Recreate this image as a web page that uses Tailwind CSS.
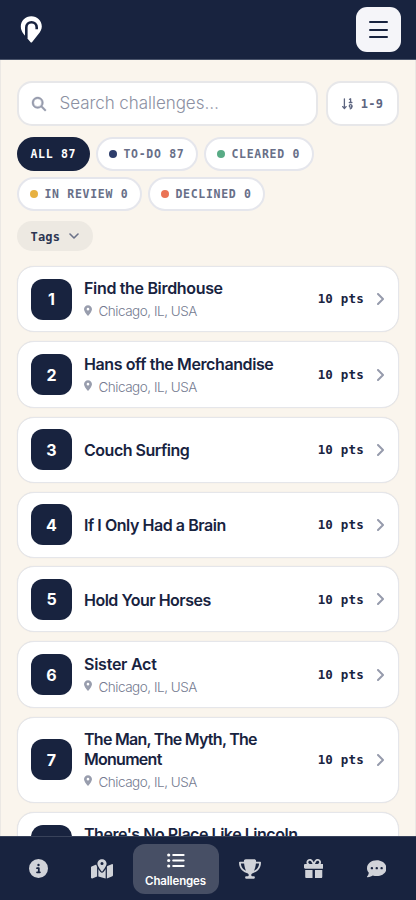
<!DOCTYPE html>
<html lang="en">
<head>
<meta charset="utf-8">
<title>Challenges</title>
<script src="https://cdn.jsdelivr.net/npm/@tailwindcss/browser@4"></script>
</head>
<body class="w-[416px] h-[900px] overflow-hidden bg-[#faf5ed] font-['Inter',sans-serif] text-[#18233f]">
<div class="flex flex-col h-[900px]">
  <header class="h-[60px] shrink-0 bg-[#18233f] border-b border-[#4a546b] flex items-center justify-between pl-5 pr-[15px]">
    <svg class="w-[22px] h-[27px]" viewBox="0 0 22 27"><path fill="#fff" d="M11.3 .2C5.4.2.8 4.8.8 10.5c0 3 1.2 5.4 3 7.8l6.6 7.8a1.2 1.2 0 0 0 1.8 0l6.1-7.8c2-2.5 3.5-4.9 3.5-7.8C21.8 4.8 17.2.2 11.3.2z"/><path fill="none" stroke="#18233f" stroke-width="2.6" d="M6.3 22.5V11.4a5.2 5.2 0 0 1 10.4 0v1.9"/></svg>
    <div class="size-[45px] rounded-[11px] bg-[#f5f5f9] flex flex-col items-center justify-center gap-[5.5px]">
      <i class="w-[19px] h-[2px] rounded bg-[#18233f]"></i><i class="w-[19px] h-[2px] rounded bg-[#18233f]"></i><i class="w-[19px] h-[2px] rounded bg-[#18233f]"></i>
    </div>
  </header>

  <main class="flex-1 min-h-0 overflow-hidden border-x border-[#ebe8e4] px-4 pt-[21px]">
    <div class="flex gap-2">
      <div class="w-[301px] h-[45px] rounded-[15px] border-2 border-[#e7e7e9] bg-white flex items-center pl-[13px]">
        <svg class="size-[14px] fill-[#969bac] shrink-0 overflow-visible stroke-[#969bac] stroke-[16px]" viewBox="0 0 512 512"><path d="M416 208c0 45.9-14.9 88.3-40 122.7L502.6 457.4c12.5 12.5 12.5 32.8 0 45.3s-32.8 12.5-45.3 0L330.7 376c-34.4 25.2-76.8 40-122.7 40C93.1 416 0 322.9 0 208S93.1 0 208 0S416 93.1 416 208zM208 352a144 144 0 1 0 0-288 144 144 0 1 0 0 288z"/></svg>
        <span class="ml-[13.5px] text-[17px] font-light tracking-[-0.05px] text-[#8c90a2] whitespace-nowrap">Search challenges…</span>
      </div>
      <div class="w-[73px] h-[45px] rounded-[15px] border-2 border-[#e7e7e9] bg-white flex items-center justify-center gap-[7px] text-[#5d6580]">
        <svg class="w-[12px] h-[12px]" viewBox="0 0 12 12" fill="none" stroke="currentColor" stroke-width="1.3" stroke-linecap="round" stroke-linejoin="round"><path d="M2.4 .8v9.5M.7 8.6l1.7 1.9 1.7-1.9M7.5 1.3l1.1-.5v3.5M7.3 4.5h2.6M9.9 8v.7q0 1.6-1.7 2.1"/><circle cx="8.6" cy="7.9" r="1.3"/></svg>
        <span class="font-['DejaVu_Sans_Mono',monospace] font-bold text-[12px] tracking-[0.3px] pt-px">1-9</span>
      </div>
    </div>

    <div class="flex flex-wrap gap-x-[6px] gap-y-[6px] mt-[10.5px] font-['DejaVu_Sans_Mono',monospace] font-bold text-[11.5px] tracking-[0.7px] text-[#686f88] whitespace-nowrap">
      <div class="w-[73px] h-[34px] rounded-full bg-[#18233f] text-white pl-[13.5px] pt-[2px] flex items-center">ALL 87</div>
      <div class="w-[102px] h-[34px] rounded-full bg-white border-2 border-[#e5e6ec] pl-[11px] flex items-center gap-[6.5px]"><i class="size-[8px] shrink-0 rounded-full bg-[#2e3d6b]"></i><span class="pt-[2px]">TO-DO 87</span></div>
      <div class="w-[110px] h-[34px] rounded-full bg-white border-2 border-[#e5e6ec] pl-[11px] flex items-center gap-[6.5px]"><i class="size-[8px] shrink-0 rounded-full bg-[#58ab85]"></i><span class="pt-[2px]">CLEARED 0</span></div>
      <div class="w-[125px] h-[34px] rounded-full bg-white border-2 border-[#e5e6ec] pl-[11px] flex items-center gap-[6.5px]"><i class="size-[8px] shrink-0 rounded-full bg-[#e7b141]"></i><span class="pt-[2px]">IN REVIEW 0</span></div>
      <div class="w-[117px] h-[34px] rounded-full bg-white border-2 border-[#e5e6ec] pl-[11px] flex items-center gap-[6.5px]"><i class="size-[8px] shrink-0 rounded-full bg-[#ea7355]"></i><span class="pt-[2px]">DECLINED 0</span></div>
    </div>

    <div class="mt-[10.5px] w-[76px] h-[30px] rounded-full bg-[#ede9e2] flex items-center pl-[13.5px] gap-[9px]">
      <span class="font-['DejaVu_Sans_Mono',monospace] font-bold text-[12px] tracking-[0.2px] text-[#2c3652] pt-[2px]">Tags</span>
      <svg class="w-[10px] h-[6px]" viewBox="0 0 10 6" fill="none" stroke="#6b7289" stroke-width="1.6" stroke-linecap="round" stroke-linejoin="round"><path d="M1 1l4 4 4-4"/></svg>
    </div>

    <div id="list" class="mt-[14.7px] flex flex-col gap-[8.8px]"></div>
  </main>

  <nav class="h-[64px] shrink-0 bg-[#18233f] border-t border-[#38425a] relative flex items-center text-[#d1d3d9] pl-[29px]">
    <svg class="size-[19px] shrink-0" fill="currentColor" viewBox="0 0 512 512"><path d="M256 512A256 256 0 1 0 256 0a256 256 0 1 0 0 512zM216 336h24V272H216c-13.3 0-24-10.7-24-24s10.7-24 24-24h48c13.3 0 24 10.7 24 24v88h8c13.3 0 24 10.7 24 24s-10.7 24-24 24H216c-13.3 0-24-10.7-24-24s10.7-24 24-24zm40-208a32 32 0 1 1 0 64 32 32 0 1 1 0-64z"/></svg>
    <svg class="w-[22px] h-[20px] shrink-0 ml-[43px]" fill="currentColor" viewBox="0 0 576 512"><path d="M408 120c0 54.6-73.1 151.9-105.2 192c-7.7 9.6-22 9.6-29.6 0C241.1 271.9 168 174.6 168 120C168 53.7 221.7 0 288 0s120 53.7 120 120zm8 80.4c3.5-6.9 6.7-13.8 9.6-20.6c.5-1.2 1-2.5 1.5-3.7l116-46.4C558.9 123.4 576 135 576 152V422.8c0 9.8-6 18.6-15.1 22.3L416 503V200.4zM137.6 138.3c2.4 14.1 7.2 28.3 12.8 41.5c2.9 6.8 6.1 13.7 9.6 20.6V451.8L32.9 502.7C17.1 509 0 497.4 0 480.4V209.6c0-9.8 6-18.6 15.1-22.3l122.6-49zM327.8 332c13.9-17.4 35.7-45.7 56.2-77V504.3L192 449.4V255c20.5 31.3 42.3 59.6 56.2 77c20.5 25.6 59.1 25.6 79.6 0zM288 152a40 40 0 1 0 0-80 40 40 0 1 0 0 80z"/></svg>
    <div class="w-[86px] h-[50px] shrink-0 ml-[19.5px] rounded-[12px] bg-[#474f65] text-white flex flex-col items-center pt-[9px]">
      <svg class="w-[18px] h-[15px] shrink-0" viewBox="0 0 18 15" fill="currentColor"><circle cx="1.7" cy="2" r="1.6"/><circle cx="1.7" cy="7.5" r="1.6"/><circle cx="1.7" cy="13" r="1.6"/><rect x="5.2" y="1" width="12.4" height="2" rx="1"/><rect x="5.2" y="6.5" width="12.4" height="2" rx="1"/><rect x="5.2" y="12" width="12.4" height="2" rx="1"/></svg>
      <span class="text-[11.5px] leading-[14px] font-semibold mt-[6px] tracking-[-0.15px]">Challenges</span>
    </div>
    <svg class="w-[22px] h-[20px] shrink-0 ml-[20.5px]" fill="currentColor" viewBox="0 0 576 512"><path d="M400 0H176c-26.5 0-48.1 21.8-47.1 48.2c.2 5.3 .4 10.6 .7 15.8H24C10.7 64 0 74.7 0 88c0 92.6 33.5 157 78.5 200.7c44.3 43.1 98.3 64.8 138.1 75.8c23.4 6.5 39.4 26 39.4 45.6c0 20.9-17 37.9-37.9 37.9H192c-17.7 0-32 14.3-32 32s14.3 32 32 32H384c17.7 0 32-14.3 32-32s-14.3-32-32-32H357.9C337 448 320 431 320 410.1c0-19.6 15.9-39.2 39.4-45.6c39.9-11 93.9-32.7 138.2-75.8C542.5 245 576 180.6 576 88c0-13.3-10.7-24-24-24H446.4c.3-5.2 .5-10.4 .7-15.8C448.1 21.8 426.5 0 400 0zM48.9 112h84.4c9.1 90.1 29.2 150.3 51.9 190.6c-24.9-11-50.8-26.5-73.2-48.3c-32-31.1-58-76-63-142.3zM464.1 254.3c-22.4 21.8-48.3 37.3-73.2 48.3c22.7-40.3 42.8-100.5 51.9-190.6h84.4c-5.1 66.3-31.1 111.2-63 142.3z"/></svg>
    <svg class="size-[19.5px] shrink-0 ml-[42.5px]" fill="currentColor" viewBox="0 0 512 512"><path d="M190.5 68.8L225.3 128H224 152c-22.1 0-40-17.9-40-40s17.9-40 40-40h2.2c14.9 0 28.8 7.9 36.3 20.8zM64 88c0 14.4 3.5 28 9.6 40H32c-17.7 0-32 14.3-32 32v64c0 17.7 14.3 32 32 32H480c17.7 0 32-14.3 32-32V160c0-17.7-14.3-32-32-32H438.4c6.1-12 9.6-25.6 9.6-40c0-48.6-39.4-88-88-88h-2.2c-31.9 0-61.5 16.9-77.7 44.4L256 85.5l-24.1-41C215.7 16.9 186.1 0 154.2 0H152C103.4 0 64 39.4 64 88zm336 0c0 22.1-17.9 40-40 40H288h-1.3l34.8-59.2C329.1 55.9 342.9 48 357.8 48H360c22.1 0 40 17.9 40 40zM32 288V464c0 26.5 21.5 48 48 48H224V288H32zM288 512H432c26.5 0 48-21.5 48-48V288H288V512z"/></svg>
    <svg class="size-[19.5px] shrink-0 ml-[43.5px]" fill="currentColor" viewBox="0 0 512 512"><path d="M256 448c141.4 0 256-93.1 256-208S397.4 32 256 32S0 125.1 0 240c0 45.1 17.7 86.8 47.7 120.9c-1.9 24.5-11.4 46.3-21.4 62.9c-5.5 9.2-11.1 16.6-15.2 21.6c-2.1 2.5-3.7 4.4-4.9 5.7c-.6 .6-1 1.1-1.3 1.4l-.3 .3c-4.6 4.6-5.9 11.4-3.4 17.4c2.5 6 8.3 9.9 14.8 9.9c28.7 0 57.6-8.9 81.6-19.3c22.9-10 42.4-21.9 54.3-30.6c31.8 11.5 67 17.9 104.1 17.9zM128 208a32 32 0 1 1 0 64 32 32 0 1 1 0-64zm128 0a32 32 0 1 1 0 64 32 32 0 1 1 0-64zm96 32a32 32 0 1 1 64 0 32 32 0 1 1-64 0z"/></svg>
  </nav>
</div>
<script>
const L = 'Chicago, IL, USA';
// title, location, card height, letter spacing
const items = [
  ['Find the Birdhouse', L, 66.8, -0.33], ['Hans off the Merchandise', L, 66.8, -0.4], ['Couch Surfing', '', 66, -0.48],
  ['If I Only Had a Brain', '', 66, -0.45], ['Hold Your Horses', '', 66, -0.5], ['Sister Act', L, 66.8, -0.25],
  ['The Man, The Myth, The<br>Monument', L, 86, -0.73], ["There's No Place Like Lincoln", L, 66.8, -0.46]
];
document.getElementById('list').innerHTML = items.map(([t, loc, h, ls], i) => `
<div class="shrink-0 w-[382px] rounded-[17px] border border-[#e5e6ea] bg-white flex items-center pl-[13px] pr-[14px] shadow-[0_0_1px_rgba(24,35,63,0.12)]" style="height:${h}px">
  <div class="size-[41px] shrink-0 rounded-[12px] bg-[#18233f] text-white font-bold text-[16px] flex items-center justify-center">${i + 1}</div>
  <div class="ml-[12px] flex-1 whitespace-nowrap pt-[2px]">
    <div class="font-semibold text-[16px] leading-[19.4px]" style="letter-spacing:${ls}px">${t}</div>
    ${loc ? `<div class="flex items-center gap-[6.5px] mt-[3px] h-[19px]"><svg class="w-[8px] h-[11px] fill-[#989dad] mb-[2px]" viewBox="0 0 384 512"><path d="M215.7 499.2C267 435 384 279.4 384 192C384 86 298 0 192 0S0 86 0 192c0 87.4 117 243 168.3 307.2c12.3 15.3 35.1 15.3 47.4 0zM192 128a64 64 0 1 1 0 128 64 64 0 1 1 0-128z"/></svg><span class="text-[13.5px] font-light tracking-[-0.48px] text-[#747b90]">${loc}</span></div>` : ''}
  </div>
  <span class="font-['DejaVu_Sans_Mono',monospace] font-bold text-[12.5px] tracking-[0.2px] whitespace-nowrap pt-px">10 pts</span>
  <svg class="ml-[13px] w-[7px] h-[12px] shrink-0" viewBox="0 0 7 12" fill="none" stroke="#969bac" stroke-width="2" stroke-linecap="round" stroke-linejoin="round"><path d="M1 1l5 5-5 5"/></svg>
</div>`).join('');
</script>
</body>
</html>
